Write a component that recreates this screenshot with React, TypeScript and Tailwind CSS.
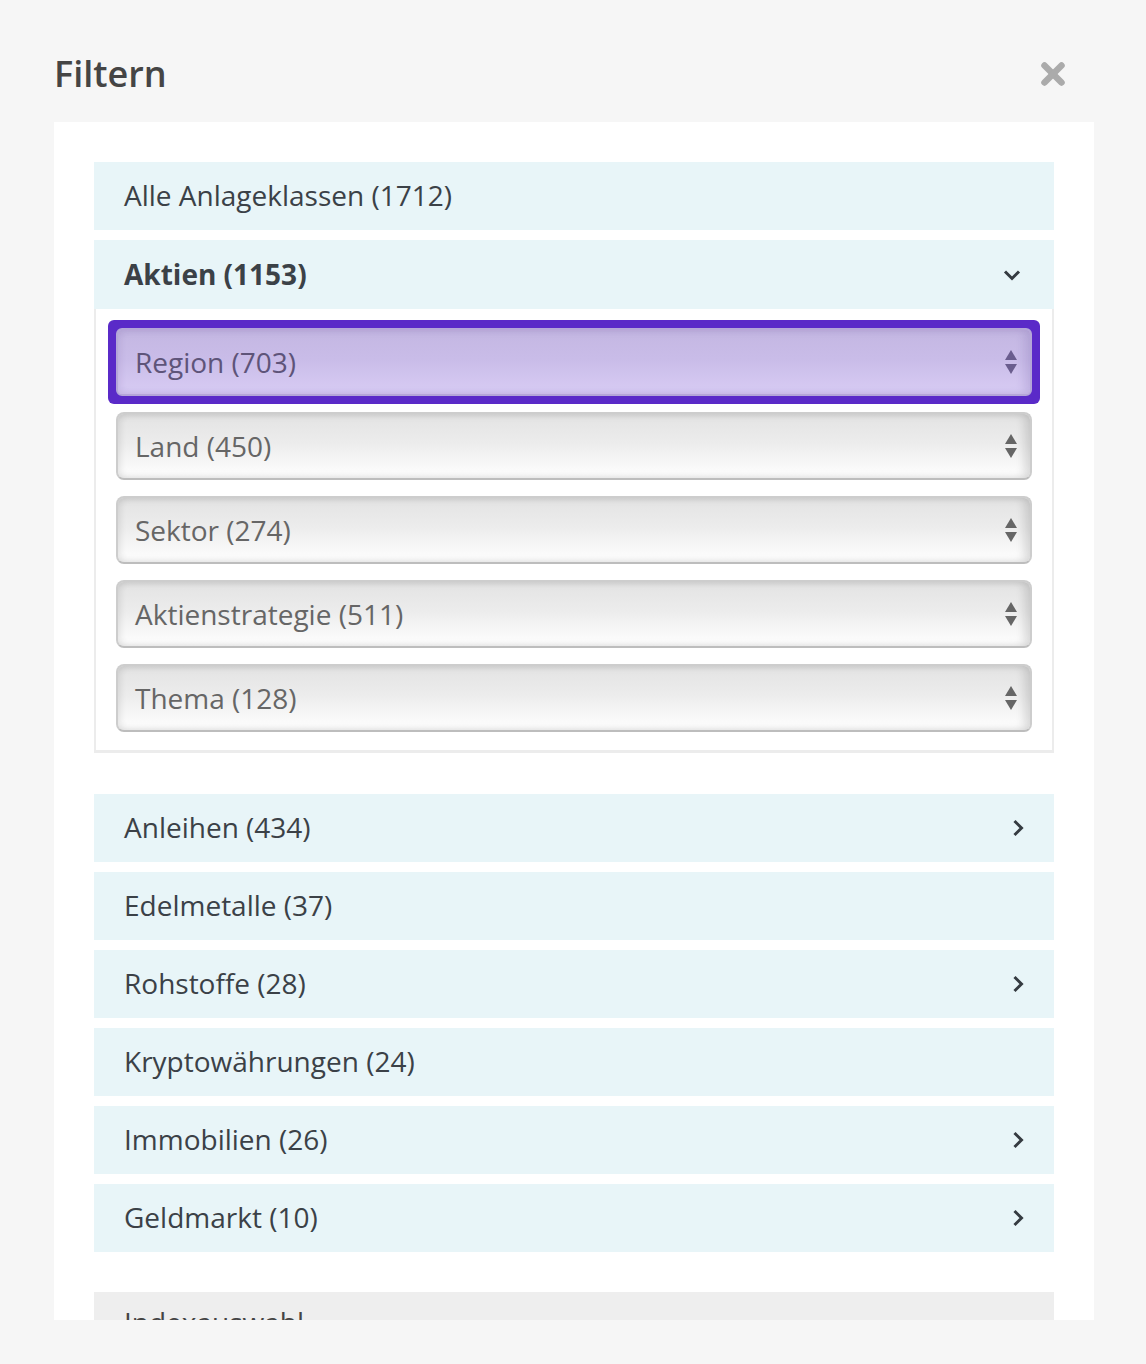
import React from 'react';

interface Category {
  label: string;
  chevron?: boolean;
}

const categoriesAfter: Category[] = [
  { label: 'Anleihen (434)', chevron: true },
  { label: 'Edelmetalle (37)' },
  { label: 'Rohstoffe (28)', chevron: true },
  { label: 'Kryptowährungen (24)' },
  { label: 'Immobilien (26)', chevron: true },
  { label: 'Geldmarkt (10)', chevron: true },
];

const subFilters = ['Land (450)', 'Sektor (274)', 'Aktienstrategie (511)', 'Thema (128)'];

const ChevronRight = () => (
  <svg width="12" height="18" viewBox="0 0 12 18" fill="none">
    <polyline points="2.5,2 9.5,9 2.5,16" stroke="#353b41" strokeWidth="3" strokeLinejoin="miter" />
  </svg>
);

const ChevronDown = () => (
  <svg width="18" height="12" viewBox="0 0 18 12" fill="none">
    <polyline points="2,2.5 9,9.5 16,2.5" stroke="#353b41" strokeWidth="3" strokeLinejoin="miter" />
  </svg>
);

const SortArrows = ({ color }: { color: string }) => (
  <svg width="14" height="26" viewBox="0 0 14 26">
    <polygon points="1,11 13,11 7,1" fill={color} />
    <polygon points="1,15 13,15 7,25" fill={color} />
  </svg>
);

const SelectBox = ({ label }: { label: string }) => (
  <div className="flex h-[68px] items-center justify-between rounded-[8px] border-2 border-[#cdcdcd] border-b-[#bdbdbd] bg-[linear-gradient(to_bottom,#e3e3e3_0%,#ececec_45%,#ffffff_100%)] pl-[17px] pr-[12px] text-[28px] text-[#666666] shadow-[inset_3px_0_6px_rgba(0,0,0,0.08),inset_-6px_0_8px_rgba(0,0,0,0.12)]">
    <span>{label}</span>
    <SortArrows color="#666666" />
  </div>
);

const Row = ({ label, chevron }: Category) => (
  <div className="flex h-[68px] items-center justify-between bg-[#e8f5f8] pl-[30px] pr-[30px] text-[28px] text-[#3b4147]">
    <span className="-mt-[2px]">{label}</span>
    {chevron && <ChevronRight />}
  </div>
);

export default function App() {
  return (
    <div className="min-h-[1364px] bg-[#f6f6f6] font-['Open_Sans',sans-serif]">
      <div className="flex items-center justify-between pl-[55px] pr-[80px] pt-[56px]">
        <h2 className="-ml-px text-[36px] leading-[36px] font-semibold text-[#454545]">Filtern</h2>
        <button aria-label="Schließen">
          <svg width="26" height="26" viewBox="0 0 26 26">
            <line x1="4.5" y1="4.5" x2="21.5" y2="21.5" stroke="#ababab" strokeWidth="6.5" strokeLinecap="round" />
            <line x1="21.5" y1="4.5" x2="4.5" y2="21.5" stroke="#ababab" strokeWidth="6.5" strokeLinecap="round" />
          </svg>
        </button>
      </div>

      <div className="mt-[30px] ml-[54px] h-[1198px] w-[1040px] overflow-hidden bg-white px-10 pt-10">
        <div className="flex flex-col gap-[10px]">
          <Row label="Alle Anlageklassen (1712)" />

          <div className="mb-[31px]">
            <div className="flex h-[69px] items-center justify-between bg-[#e8f5f8] pl-[30px] pr-[33px] text-[28px] font-bold text-[#3b4147]">
              <span className="-mt-[2px]">Aktien (1153)</span>
              <ChevronDown />
            </div>
            <div className="border-2 border-t-0 border-b-[3px] border-[#ececec] px-[20px] pt-[19px] pb-[18px]">
              <div className="flex flex-col gap-4">
                <div className="-m-2 rounded-[6px] bg-[#5a2ac8] p-2">
                  <div className="flex h-[68px] items-center justify-between rounded-[6px] border-2 border-[#b4a6d8] bg-[linear-gradient(to_bottom,#c4b7e2_0%,#c9bce8_45%,#d8ccf4_100%)] pl-[17px] pr-[12px] text-[28px] text-[#5e5479] shadow-[inset_3px_0_6px_rgba(60,30,120,0.08),inset_-6px_0_8px_rgba(60,30,120,0.12)]">
                    <span>Region (703)</span>
                    <SortArrows color="#6a5d8e" />
                  </div>
                </div>
                {subFilters.map(label => (
                  <SelectBox key={label} label={label} />
                ))}
              </div>
            </div>
          </div>

          {categoriesAfter.map(category => (
            <Row key={category.label} label={category.label} chevron={category.chevron} />
          ))}

          <div className="mt-[30px] flex h-[68px] items-start bg-[#eeeeee] pl-[30px] pt-[9px] text-[28px] text-[#444444]">
            Indexauswahl
          </div>
        </div>
      </div>
    </div>
  );
}
